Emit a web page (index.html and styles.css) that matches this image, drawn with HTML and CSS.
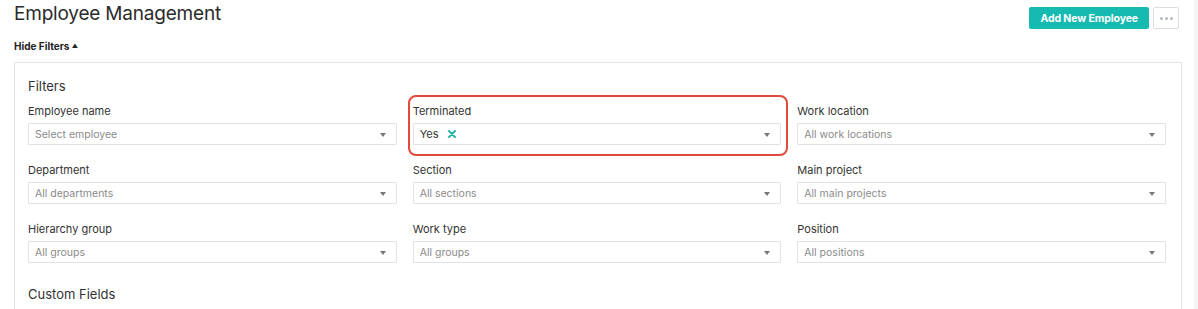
FILE: index.html
```html
<!DOCTYPE html>
<html lang="en">
<head>
  <meta charset="UTF-8" />
  <title>Employee Management</title>
  <link rel="stylesheet" href="styles.css">
</head>
<body>
  <div class="page">
    <div class="header">
      <h1>Employee Management</h1>
      <div class="actions">
        <button class="btn-primary">Add New Employee</button>
        <button class="btn-more"><span></span><span></span><span></span></button>
      </div>
    </div>
    <div class="toggle">Hide Filters <span class="caret">&#9650;</span></div>

    <div class="panel">
      <h2>Filters</h2>
      <div class="filters">
        <div class="field">
          <label>Employee name</label>
          <div class="select placeholder">Select employee</div>
        </div>
        <div class="field highlight">
          <label>Terminated</label>
          <div class="select">
            <span class="value">Yes</span>
            <svg class="clear" width="8" height="8" viewBox="0 0 8 8">
              <path d="M1 1 L7 7 M7 1 L1 7" stroke="#2bb5a6" stroke-width="2" stroke-linecap="round" />
            </svg>
          </div>
        </div>
        <div class="field">
          <label>Work location</label>
          <div class="select placeholder">All work locations</div>
        </div>

        <div class="field">
          <label>Department</label>
          <div class="select placeholder">All departments</div>
        </div>
        <div class="field">
          <label>Section</label>
          <div class="select placeholder">All sections</div>
        </div>
        <div class="field">
          <label>Main project</label>
          <div class="select placeholder">All main projects</div>
        </div>

        <div class="field">
          <label>Hierarchy group</label>
          <div class="select placeholder">All groups</div>
        </div>
        <div class="field">
          <label>Work type</label>
          <div class="select placeholder">All groups</div>
        </div>
        <div class="field">
          <label>Position</label>
          <div class="select placeholder">All positions</div>
        </div>
      </div>
      <h2 class="custom">Custom Fields</h2>
    </div>
  </div>
  <div class="scroll-strip"></div>
</body>
</html>
```

FILE: styles.css
```css
* {
  margin: 0;
  padding: 0;
  box-sizing: border-box;
  font-family: Inter, 'Liberation Sans', sans-serif;
}

html, body {
  height: 100%;
  background: #ffffff;
  overflow: hidden;
}

body {
  display: flex;
}

.page {
  flex-grow: 1;
  padding: 0 12px 0 14px;
}

.scroll-strip {
  width: 4px;
  background: #f4f4f6;
}

.header {
  display: flex;
  justify-content: space-between;
  align-items: flex-start;
  height: 36px;
}

.header h1 {
  font-size: 19px;
  font-weight: 400;
  color: #2b2b2b;
  line-height: 28px;
  letter-spacing: -0.2px;
}

.actions {
  display: flex;
  gap: 4px;
  margin-top: 7px;
  margin-right: 3px;
}

.btn-primary {
  height: 22px;
  padding: 0 11px;
  border: none;
  border-radius: 2px;
  background: #17bab1;
  color: #ffffff;
  font-size: 10.5px;
  font-weight: 700;
  letter-spacing: -0.1px;
  cursor: pointer;
}

.btn-more {
  width: 26px;
  height: 22px;
  background: #ffffff;
  border: 1px solid #dddddd;
  border-radius: 2px;
  display: flex;
  align-items: center;
  justify-content: center;
  gap: 2px;
}

.btn-more span {
  width: 3px;
  height: 3px;
  border-radius: 50%;
  background: #b3b9c4;
}

.toggle {
  font-size: 10px;
  font-weight: 700;
  color: #222;
  line-height: 20px;
}

.toggle .caret {
  font-size: 6px;
  vertical-align: 2px;
}

.panel {
  margin-top: 6px;
  border: 1px solid #e4e4e4;
  border-bottom: none;
  padding: 15px 15px 20px 13px;
  height: 260px;
}

.panel h2 {
  font-size: 13px;
  font-weight: 400;
  color: #333;
  line-height: 17px;
}

.filters {
  display: grid;
  grid-template-columns: repeat(3, 1fr);
  column-gap: 16px;
  row-gap: 18px;
  margin-top: 9px;
}

.field {
  position: relative;
}

.field label {
  display: block;
  font-size: 11px;
  color: #333;
  line-height: 14px;
  margin-bottom: 5px;
}

.select {
  height: 22px;
  border: 1px solid #e2e2e2;
  border-radius: 1px;
  padding: 0 24px 0 6px;
  display: flex;
  align-items: center;
  font-size: 11px;
  color: #333;
  position: relative;
}

.select::after {
  content: "";
  position: absolute;
  right: 10px;
  top: 9px;
  border-left: 3.5px solid transparent;
  border-right: 3.5px solid transparent;
  border-top: 4px solid #777777;
}

.select.placeholder {
  color: #8a8a8a;
  font-size: 10.5px;
}

.select .clear {
  margin-left: 9px;
}

.highlight::before {
  content: "";
  position: absolute;
  left: -5px;
  right: -7px;
  top: -9px;
  bottom: -11px;
  border: 2px solid #e04a3b;
  border-radius: 8px;
}

.custom {
  margin-top: 23px;
}
```
